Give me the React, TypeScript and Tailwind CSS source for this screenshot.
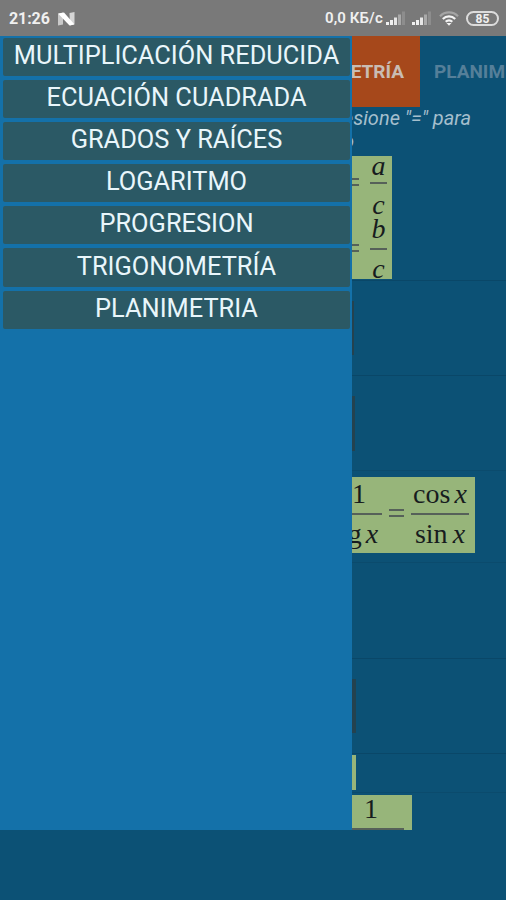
import React from "react";

const menuItems = [
  "MULTIPLICACIÓN REDUCIDA",
  "ECUACIÓN CUADRADA",
  "GRADOS Y RAÍCES",
  "LOGARITMO",
  "PROGRESION",
  "TRIGONOMETRÍA",
  "PLANIMETRIA",
];

type FractionProps = {
  top: React.ReactNode;
  bottom?: React.ReactNode;
  className?: string;
  topClass: string;
  bottomClass?: string;
};

function Fraction({ top, bottom, className = "", topClass, bottomClass = "" }: FractionProps) {
  return (
    <div className={`flex shrink-0 flex-col items-center whitespace-nowrap ${className}`}>
      <div className={`shrink-0 ${topClass}`}>{top}</div>
      <div className="h-[2px] w-full shrink-0 bg-[#566159]" />
      <div className={`shrink-0 ${bottomClass}`}>{bottom}</div>
    </div>
  );
}

function Equals({ className = "" }: { className?: string }) {
  return (
    <div className={`flex w-[15px] shrink-0 flex-col gap-[4px] ${className}`}>
      <div className="h-[2px] bg-[#566159]" />
      <div className="h-[2px] bg-[#566159]" />
    </div>
  );
}

function Signal() {
  return (
    <svg width="20" height="15" viewBox="0 0 20 15">
      <rect x="0" y="11" width="3" height="3" fill="#f0f0f0" />
      <rect x="4" y="9" width="3" height="5" fill="#f0f0f0" />
      <rect x="8" y="6.5" width="3" height="7.5" fill="#e6e6e6" />
      <rect x="12" y="3.5" width="3" height="10.5" fill="#a9a9a9" />
      <rect x="16" y="0.5" width="3" height="13.5" fill="#8d8d8d" />
    </svg>
  );
}

function StatusBar() {
  return (
    <header className="flex h-9 shrink-0 items-center bg-[#797979] pt-px pr-[7px] pl-[9px] text-[#f0f0f0]">
      <span className="w-[49px] text-[16px] font-bold tracking-[-0.1px]">21:26</span>
      <svg width="17" height="14" viewBox="0 0 17 14">
        <path d="M0 2 L5 0.5 V12.5 L0 13.5 Z" fill="#c9c9c9" />
        <path d="M11.5 1 L16.5 0 V12 L12 13.5 Z" fill="#d5d5d5" />
        <path d="M0 1.5 L6 0.5 L16.5 12.5 L11.5 13.5 Z" fill="#fff" />
      </svg>
      <span className="ml-auto w-[61px] text-[15px] font-semibold tracking-[0.1px] whitespace-nowrap">0,0 КБ/с</span>
      <Signal />
      <div className="ml-[6px]">
        <Signal />
      </div>
      <svg className="ml-[7px]" width="20" height="15" viewBox="0 0 20 15" fill="none" strokeWidth="2.2">
        <path d="M1 5.2 C6 0.2 14 0.2 19 5.2" stroke="#a5a5a5" />
        <path d="M3.8 8 C7.3 4.5 12.7 4.5 16.2 8" stroke="#f5f5f5" />
        <path d="M6.7 10.8 C8.6 9 11.4 9 13.3 10.8" stroke="#f5f5f5" />
        <path d="M7.5 12 H12.5 L10 14.8 Z" fill="#f5f5f5" />
      </svg>
      <div className="ml-[7px] flex h-[15px] w-[33px] items-center justify-center rounded-full border-2 border-[#dcdcdc]">
        <span className="text-[12px] leading-none font-bold">85</span>
      </div>
    </header>
  );
}

function Drawer() {
  return (
    <nav className="flex w-[352px] shrink-0 flex-col gap-[4px] bg-[#1471a9] pt-[2px] pr-[2px] pl-[3px]">
      {menuItems.map((item) => (
        <button
          key={item}
          className="h-[38.1px] shrink-0 rounded-[2px] bg-[#2b5965] pb-[4px] text-[25.4px] leading-[34px] whitespace-nowrap text-[#e9f6fb]"
        >
          {item}
        </button>
      ))}
    </nav>
  );
}

// Part of the trigonometry page that stays visible beside the drawer
function Content() {
  return (
    <main className="flex w-[154px] shrink-0 flex-col overflow-hidden">
      <div className="flex h-[71px] shrink-0 items-center pt-px text-[19px] font-bold">
        <div className="-mt-px flex h-[71px] w-[68px] shrink-0 items-center justify-end overflow-hidden bg-[#a6481b] pt-[2px] pr-[16px] text-[#c9bcb3]">
          TRIGONOMETRÍA
        </div>
        <span className="pl-[14px] whitespace-nowrap text-[#557f99]">PLANIMETRÍA</span>
      </div>

      <div className="h-[49px] shrink-0 text-[20px] leading-[23px] text-[#a5bfcd] italic">
        <div className="flex w-[119px] justify-end whitespace-nowrap">Presione "=" para</div>
        <div className="flex w-[2px] justify-end whitespace-nowrap">cálculo</div>
      </div>

      <div className="h-[125px] shrink-0 border-b border-[#0a4768]">
        <div className="h-[123px] w-[40px] overflow-hidden bg-[#97b57a] pr-[5px] font-['Liberation_Serif',serif] text-[28px] text-[#171c1e] italic">
          <div className="flex h-[62px] justify-end gap-[11px]">
            <Equals className="pt-[22px]" />
            <Fraction
              top="a"
              bottom="c"
              className="w-[17px]"
              topClass="h-[26px] leading-[19px]"
              bottomClass="leading-[41px]"
            />
          </div>
          <div className="flex h-[61px] justify-end gap-[11px]">
            <Equals className="pt-[26px]" />
            <Fraction
              top="b"
              bottom="c"
              className="w-[17px]"
              topClass="h-[30px] leading-[21px]"
              bottomClass="leading-[38px]"
            />
          </div>
        </div>
      </div>

      <div className="h-[95px] shrink-0 border-b border-[#0a4768] pt-[20px]">
        <div className="h-[54px] w-[2px] bg-[#24424f]" />
      </div>
      <div className="h-[95px] shrink-0 border-b border-[#0b4b6d] pt-[20px]">
        <div className="h-[55px] w-[3px] bg-[#24424f]" />
      </div>

      <div className="h-[92px] shrink-0 border-b border-[#0b4b6d] pt-[6px]">
        <div className="flex h-[76px] w-[123px] justify-end overflow-hidden bg-[#97b57a] pr-[6px] font-['Liberation_Serif',serif] text-[28px] text-[#171c1e]">
          <Fraction
            top="1"
            bottom={
              <>
                tg <i className="-ml-[3px]">x</i>
              </>
            }
            className="w-[46px]"
            topClass="h-[36px] leading-[34px]"
            bottomClass="leading-[37px]"
          />
          <Equals className="mx-[7px] pt-[32px]" />
          <Fraction
            top={
              <>
                cos <i className="-ml-[3px]">x</i>
              </>
            }
            bottom={
              <>
                sin <i className="-ml-[2px]">x</i>
              </>
            }
            className="w-[58px]"
            topClass="h-[36px] leading-[34px]"
            bottomClass="leading-[37px]"
          />
        </div>
      </div>

      <div className="h-[96px] shrink-0 border-b border-[#0a4768]" />
      <div className="h-[95px] shrink-0 border-b border-[#0a4768] pt-[20px]">
        <div className="h-[54px] w-[4px] bg-[#24424f]" />
      </div>
      <div className="h-[39px] shrink-0 border-b border-[#0b4b6d] pt-px">
        <div className="h-[35px] w-[4px] bg-[#97b57a]" />
      </div>

      <div className="mt-[2px] flex h-[35px] w-[60px] shrink-0 justify-end overflow-hidden bg-[#97b57a] pr-[8px] font-['Liberation_Serif',serif] text-[28px] text-[#171c1e]">
        <Fraction top="1" className="w-[66px]" topClass="h-[33px] leading-[28px]" />
      </div>
    </main>
  );
}

export default function App() {
  return (
    <div className="flex h-[900px] w-[506px] flex-col overflow-hidden bg-[#0c5175] font-[Roboto,sans-serif]">
      <StatusBar />
      <div className="flex h-[794px] shrink-0">
        <Drawer />
        <Content />
      </div>
    </div>
  );
}
